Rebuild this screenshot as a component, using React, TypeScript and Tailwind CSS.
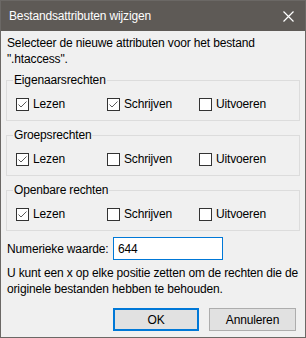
import React from "react";

const font = { fontFamily: '"Liberation Sans", Arial, sans-serif' };

type Perm = { label: string; checked: boolean };

const groups: { title: string; perms: Perm[] }[] = [
    {
        title: "Eigenaarsrechten",
        perms: [
            { label: "Lezen", checked: true },
            { label: "Schrijven", checked: true },
            { label: "Uitvoeren", checked: false },
        ],
    },
    {
        title: "Groepsrechten",
        perms: [
            { label: "Lezen", checked: true },
            { label: "Schrijven", checked: false },
            { label: "Uitvoeren", checked: false },
        ],
    },
    {
        title: "Openbare rechten",
        perms: [
            { label: "Lezen", checked: true },
            { label: "Schrijven", checked: false },
            { label: "Uitvoeren", checked: false },
        ],
    },
];

const CheckBox = ({ checked, label }: Perm) => (
    <div className="flex items-center h-4">
        <span className="w-[13px] h-[13px] border border-[#333333] bg-white flex items-center justify-center shrink-0">
            {checked && (
                <svg width="11" height="11" viewBox="0 0 11 11">
                    <path d="M1.5 5.5 L4 8 L9.5 2.5" fill="none" stroke="#5a5a5a" strokeWidth="1" />
                </svg>
            )}
        </span>
        <span className="ml-[4px]">{label}</span>
    </div>
);

const Group = ({ title, perms }: { title: string; perms: Perm[] }) => (
    <fieldset className="h-[49px] border border-[#dcdcdc] pl-[6px] mt-[6px] first:mt-[5px]">
        <legend className="px-[1px] h-4 leading-4">{title}</legend>
        <div className="flex mt-[8px] pl-[3px]">
            <div className="w-[91px]">
                <CheckBox {...perms[0]} />
            </div>
            <div className="w-[92px]">
                <CheckBox {...perms[1]} />
            </div>
            <div>
                <CheckBox {...perms[2]} />
            </div>
        </div>
    </fieldset>
);

export default function App() {
    return (
        <div
            className="w-[306px] h-[338px] overflow-hidden border border-[#6b6865] bg-[#f0f0f0] flex flex-col text-[12px] tracking-[-0.15px] text-black leading-4 whitespace-nowrap"
            style={font}
        >
            <div className="h-[30px] bg-[#5e5a56] flex items-center justify-between pl-[8px] pr-[11px] shrink-0">
                <span className="text-white text-[12px]">Bestandsattributen wijzigen</span>
                <svg width="11" height="11" viewBox="0 0 11 11">
                    <path d="M0.5 0.5 L10.5 10.5 M10.5 0.5 L0.5 10.5" stroke="white" strokeWidth="1.2" />
                </svg>
            </div>
            <div className="flex flex-col px-[5px]">
                <p className="pt-[4px] pl-[1px]">
                    Selecteer de nieuwe attributen voor het bestand
                    <br />
                    ".htaccess".
                </p>
                <div className="flex flex-col">
                    {groups.map((g) => (
                        <Group key={g.title} title={g.title} perms={g.perms} />
                    ))}
                </div>
                <div className="flex items-center mt-[6px] pl-[1px]">
                    <span className="w-[106px] shrink-0">Numerieke waarde:</span>
                    <div className="w-[110px] h-[23px] border border-[#0078d7] bg-white flex items-center pl-[4px]">
                        644
                    </div>
                </div>
                <p className="mt-[5px] pl-[1px]">
                    U kunt een x op elke positie zetten om de rechten die de
                    <br />
                    originele bestanden hebben te behouden.
                </p>
                <div className="flex justify-end gap-[10px] mt-[11px] pr-[4px]">
                    <button className="w-[86px] h-[23px] border-2 border-[#0078d7] bg-[#e1e1e1]">OK</button>
                    <button className="w-[87px] h-[23px] border border-[#adadad] bg-[#e1e1e1]">Annuleren</button>
                </div>
            </div>
        </div>
    );
}
